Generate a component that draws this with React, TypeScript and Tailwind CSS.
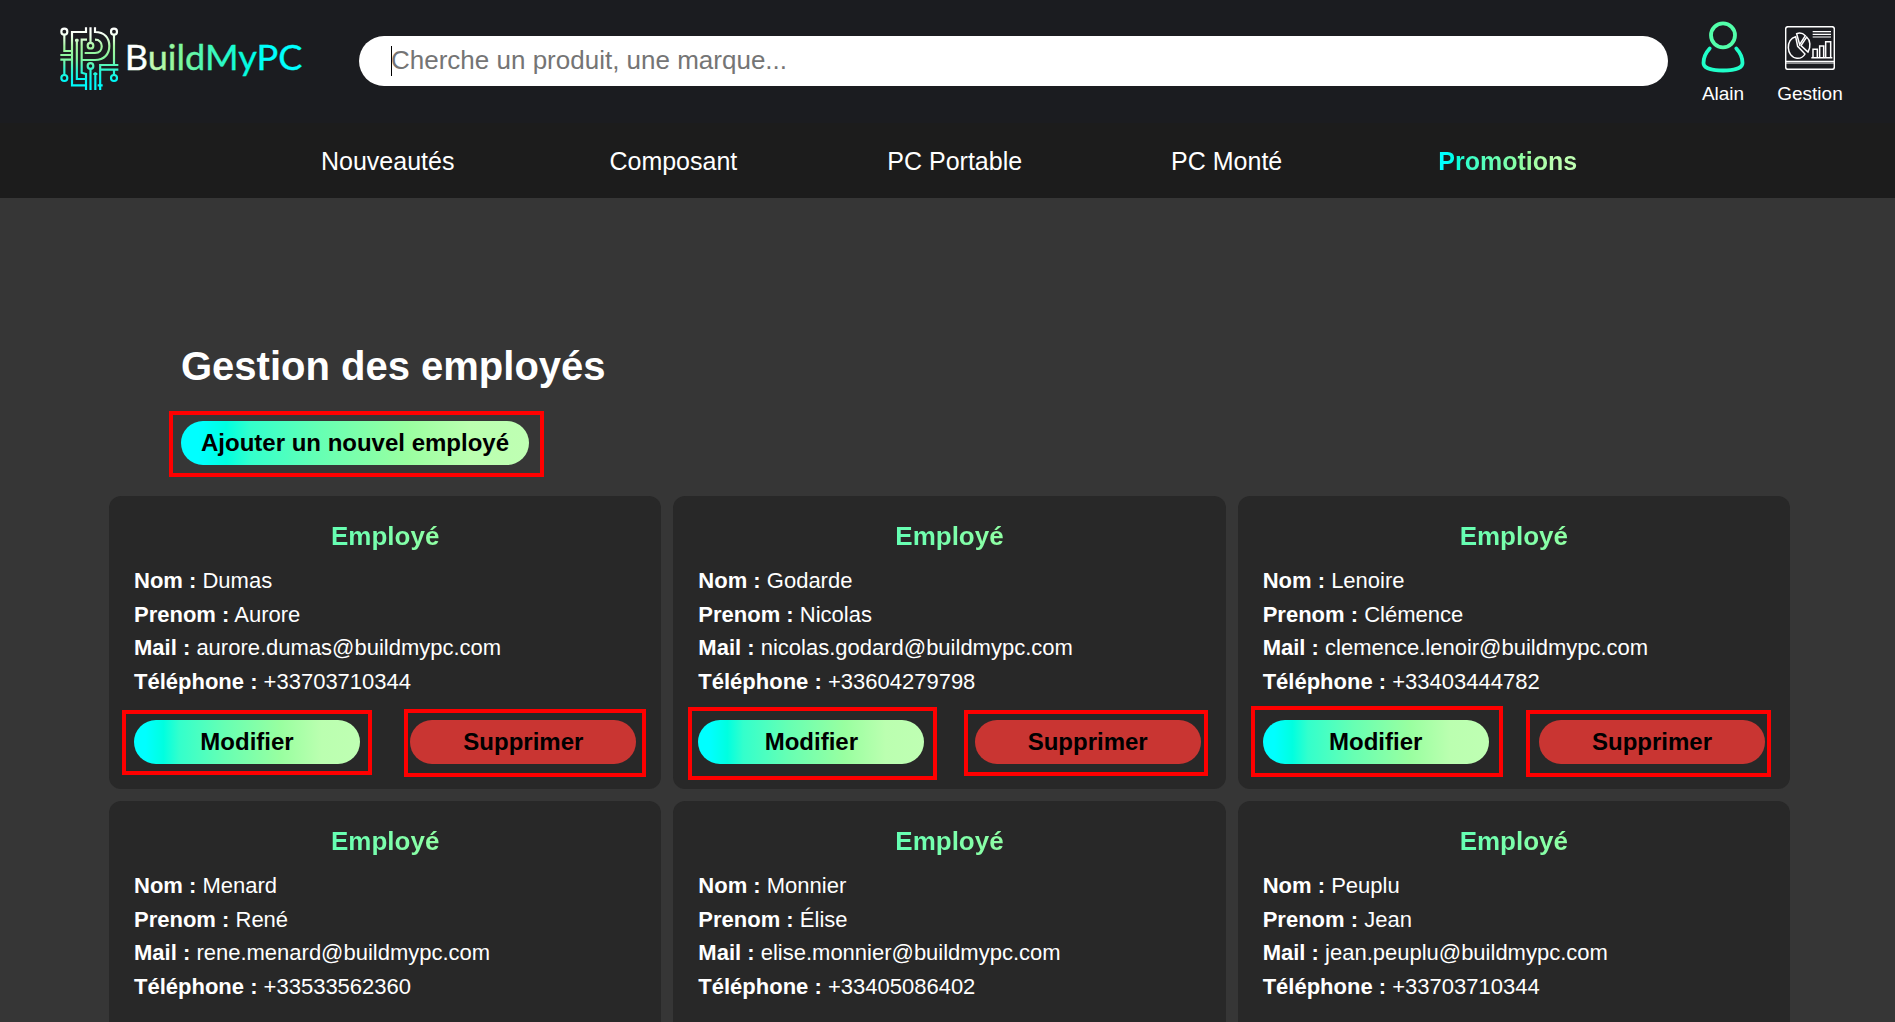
import React from "react";

const GRADIENT =
  "bg-[linear-gradient(90deg,#00ffff_0%,#00ffff_5%,#00ffe0_13%,#33ffcc_20%,#66ffb3_40%,#99ffa0_65%,#bbffb0_83%,#bfffb3_100%)]";

const EMPLOYEES = [
  {
    nom: "Dumas", prenom: "Aurore", mail: "aurore.dumas@buildmypc.com", tel: "+33703710344",
    edit: "left-[-12px] top-[-10px] w-[250px] h-[65px]",
    remove: "left-[-6px] top-[-11px] w-[242px] h-[68px]",
  },
  {
    nom: "Godarde", prenom: "Nicolas", mail: "nicolas.godard@buildmypc.com", tel: "+33604279798",
    edit: "left-[-10px] top-[-13px] w-[249px] h-[73px]",
    remove: "left-[-11px] top-[-10px] w-[244px] h-[66px]",
  },
  {
    nom: "Lenoire", prenom: "Clémence", mail: "clemence.lenoir@buildmypc.com", tel: "+33403444782",
    edit: "left-[-12px] top-[-14px] w-[252px] h-[71px]",
    remove: "left-[-13px] top-[-10px] w-[245px] h-[67px]",
  },
  { nom: "Menard", prenom: "René", mail: "rene.menard@buildmypc.com", tel: "+33533562360" },
  { nom: "Monnier", prenom: "Élise", mail: "elise.monnier@buildmypc.com", tel: "+33405086402" },
  { nom: "Peuplu", prenom: "Jean", mail: "jean.peuplu@buildmypc.com", tel: "+33703710344" },
];

function Highlight({ box }: { box?: string }) {
  return box ? <span className={`pointer-events-none absolute border-4 border-[#ff0000] ${box}`} /> : null;
}

function Logo() {
  return (
    <svg className="h-[80px] w-[260px] shrink-0" viewBox="0 0 780 240" fill="none">
      <defs>
        <linearGradient id="chip" gradientUnits="userSpaceOnUse" x1="0" y1="22" x2="0" y2="210">
          <stop offset="0" stopColor="#ffffff" />
          <stop offset="0.12" stopColor="#f4fff2" />
          <stop offset="0.3" stopColor="#a5f5a0" />
          <stop offset="0.5" stopColor="#86f7a0" />
          <stop offset="0.68" stopColor="#2ff5d0" />
          <stop offset="0.85" stopColor="#00f5f5" />
          <stop offset="1" stopColor="#00ffff" />
        </linearGradient>
        <linearGradient id="word" gradientUnits="userSpaceOnUse" x1="230" y1="0" x2="755" y2="0">
          <stop offset="0" stopColor="#ffffff" />
          <stop offset="0.1" stopColor="#ffffff" />
          <stop offset="0.13" stopColor="#c4f8b4" />
          <stop offset="0.2" stopColor="#b4f8a8" />
          <stop offset="0.3" stopColor="#84f79a" />
          <stop offset="0.42" stopColor="#55f7b0" />
          <stop offset="0.58" stopColor="#22f9cc" />
          <stop offset="0.7" stopColor="#00fbe4" />
          <stop offset="0.8" stopColor="#00ffff" />
          <stop offset="1" stopColor="#00ffff" />
        </linearGradient>
      </defs>
      <g stroke="url(#chip)" strokeWidth="6.5">
        <circle cx="43" cy="35" r="9" />
        <circle cx="192" cy="35" r="9" />
        <circle cx="43" cy="174" r="9" />
        <circle cx="192" cy="174" r="9" />
        <circle cx="121.500" cy="77" r="8.500" />
        <circle cx="121.500" cy="138" r="8.500" />
        <path d="M43.010 44V93H66M31 105H66M31 119H66M43.010 165V119" />
        <path d="M108 22V36H66V196H107" />
        <path d="M135 22V36C164 36 178 54 178 78C178 102 163 120 135 120H94" />
        <path d="M135 59C162 59 162 99 135 99H104" />
        <path d="M111 59H95V158L108 162V210" />
        <path d="M80.500 56V177H107" />
        <path d="M121.500 22L121.510 68M121.500 147L121.510 210" />
        <path d="M136 157L136.010 210M130 162H142" />
        <path d="M192 44L192.010 135M150.500 210V135H205M205 149H152M192 149L192.010 165" />
        <path d="M143 196H158M75 61H86" />
      </g>
      <text
        x="224"
        y="150"
        fill="url(#word)"
        stroke="url(#word)"
        strokeWidth="1"
        className="font-[Lato]"
        fontSize="105"
        textLength="533"
        lengthAdjust="spacingAndGlyphs"
      >
        BuildMyPC
      </text>
    </svg>
  );
}

function UserIcon() {
  return (
    <svg className="h-[54px] w-[46px]" viewBox="0 0 46 54" fill="none" strokeWidth="3.800" strokeLinecap="round">
      <circle cx="23" cy="15.300" r="12" stroke="#52ffaa" />
      <path d="M9.700 28.500C5.500 33 3.500 38 3.500 43C3.500 48.500 13 50.500 23 50.500S42.500 48.500 42.500 43C42.500 38 40.500 33 36.300 28.500" stroke="#20ffca" />
    </svg>
  );
}

function DashboardIcon() {
  return (
    <svg className="h-[44px] w-[50px]" viewBox="0 0 150 132" fill="none" stroke="#fff" strokeWidth="4.500">
      <rect x="2" y="2" width="146" height="128" rx="7" />
      <path d="M2 106H148M2 111H148" strokeWidth="3.500" />
      <path d="M83 17H138M83 25H138M83 33H138" strokeWidth="3.500" />
      <path d="M32 32C2 38 2 93 36 97C48 98 56 91 60 84L38 61Z" />
      <path d="M35 23C46 19 55 23 61 29L44 56Z" />
      <path d="M65 33C76 42 78 63 69 78L48 59Z" />
      <path d="M79 95H142M84 94V70H97V94M104 94V60H116V94M122 94V47H137V94" />
    </svg>
  );
}

function Row({ label, value }: { label: string; value: string }) {
  return (
    <p className="whitespace-nowrap">
      <b>{label} :</b> {value}
    </p>
  );
}

export default function App() {
  return (
    <div className="h-[1022px] w-[1895px] overflow-hidden bg-[#363636] font-['Liberation_Sans',Arial,sans-serif] text-white">
      <header className="flex h-[123px] items-start bg-[#1b1c20]">
        <div className="ml-[50px] mt-5 flex">
          <Logo />
        </div>
        <div className="ml-[49px] mt-9 flex h-[50px] w-[1309px] items-center rounded-full bg-white pl-8 text-[26px] text-[#757575]">
          <span className="h-[30px] w-px bg-black" />
          <span className="-ml-px pb-0.5">Cherche un produit, une marque...</span>
        </div>
        <div className="ml-8 mt-5 flex w-[46px] flex-col items-center text-[19px] leading-[22px]">
          <UserIcon />
          <span className="mt-[9px]">Alain</span>
        </div>
        <div className="ml-[31px] mt-[26px] flex w-[66px] flex-col items-center text-[19px] leading-[22px]">
          <DashboardIcon />
          <span className="mt-[13px]">Gestion</span>
        </div>
      </header>

      <nav className="flex h-[75px] items-center bg-[#1c1c1c] pl-[321px] pt-0.5 text-[25px]">
        <a>Nouveautés</a>
        <a className="ml-[155px]">Composant</a>
        <a className="ml-[150px]">PC Portable</a>
        <a className="ml-[149px]">PC Monté</a>
        <a className={`ml-[156px] bg-clip-text font-bold text-transparent ${GRADIENT}`}>Promotions</a>
      </nav>

      <main className="pl-[109px] pt-[145px]">
        <div className="ml-[72px]">
          <h1 className="text-[40px] font-bold leading-[46px]">Gestion des employés</h1>
          <button className={`relative mt-8 block h-11 w-[348px] rounded-full text-2xl font-bold text-black ${GRADIENT}`}>
            Ajouter un nouvel employé
            <Highlight box="left-[-12px] top-[-10px] w-[375px] h-[66px]" />
          </button>
        </div>
        <div className="mt-[31px] grid w-[1681px] grid-cols-3 gap-3">
          {EMPLOYEES.map((e) => (
            <section key={e.mail} className="h-[293px] rounded-xl bg-[#282828] px-[25px] pt-[26px]">
              <h2 className={`bg-clip-text text-center text-[26px] font-bold leading-[29px] text-transparent ${GRADIENT}`}>
                Employé
              </h2>
              <div className="mt-[13px] text-[22px] leading-[33.600px]">
                <Row label="Nom" value={e.nom} />
                <Row label="Prenom" value={e.prenom} />
                <Row label="Mail" value={e.mail} />
                <Row label="Téléphone" value={e.tel} />
              </div>
              <div className="mt-[21.600px] flex justify-between text-2xl font-bold text-black">
                <button className={`relative h-11 w-[226px] rounded-full ${GRADIENT}`}>
                  Modifier
                  <Highlight box={e.edit} />
                </button>
                <button className="relative h-11 w-[226px] rounded-full bg-[#c93532]">
                  Supprimer
                  <Highlight box={e.remove} />
                </button>
              </div>
            </section>
          ))}
        </div>
      </main>
    </div>
  );
}
